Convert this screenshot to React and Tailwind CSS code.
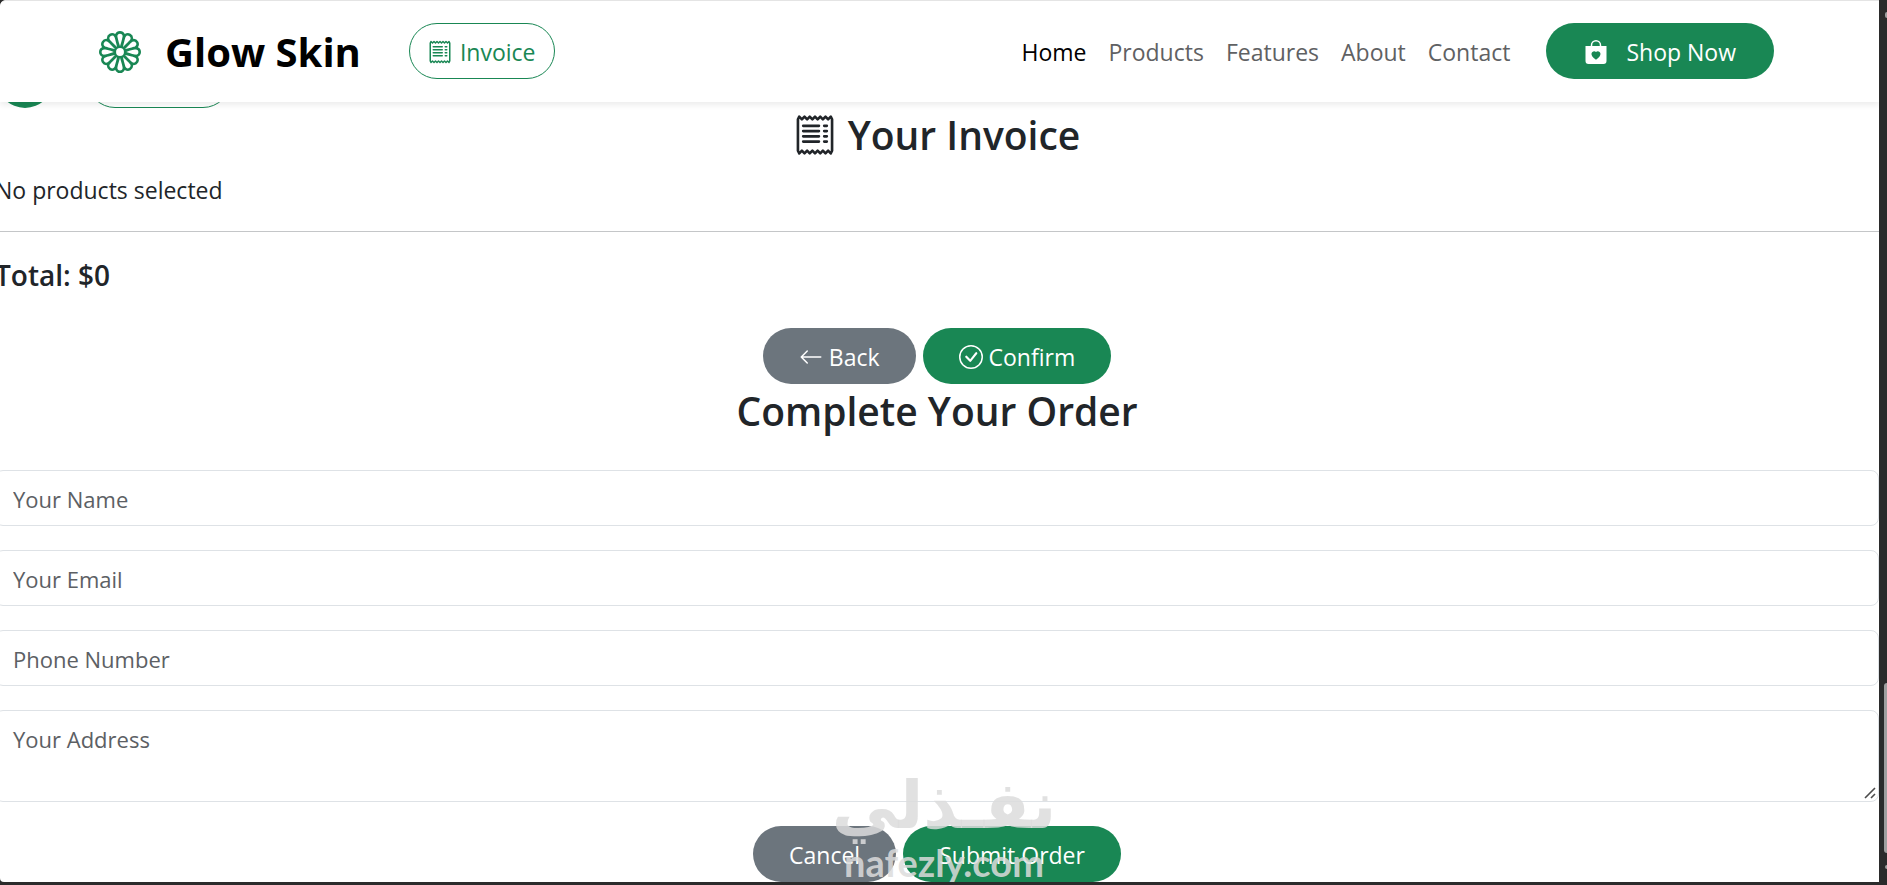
import { BsArrowLeft, BsBagHeartFill, BsCheckCircle, BsFlower1, BsReceipt } from "react-icons/bs";

const pill = "inline-flex h-14 items-center justify-center rounded-full text-[23px] leading-9 pt-0.5";
const field =
  "block w-full rounded-lg border border-[#dee2e6] bg-white px-[17px] text-[22px] text-[#212529] placeholder:text-[#5c6064] placeholder:opacity-100";

const links = ["Home", "Products", "Features", "About", "Contact"];

const fields = [
  { id: "name", label: "Your Name", type: "text" },
  { id: "email", label: "Your Email", type: "email" },
  { id: "phone", label: "Phone Number", type: "tel" },
];

function Header() {
  return (
    <header className="relative z-10 flex h-[102px] items-center justify-between rounded-tl-md border-t border-[#e4e4e4] bg-white pr-[105px] pb-0.5 pl-[99px] shadow-[0_3px_6px_rgba(0,0,0,0.08)]">
      <div className="flex items-center">
        <a href="#home" className="flex items-center gap-6 pt-0.5 text-[40px] font-bold text-black">
          <BsFlower1 className="size-[42px] text-[#198754]" />
          Glow Skin
        </a>
        <button type="button" className={`${pill} ml-12 gap-2 border border-[#198754] px-[18px] text-[#198754]`}>
          <BsReceipt className="size-6" />
          Invoice
        </button>
      </div>
      <div className="flex items-center">
        <nav className="flex items-center gap-[22px] pt-1 text-[23px] text-[#5f6163]">
          {links.map((link) => (
            <a key={link} href={`#${link.toLowerCase()}`} className={link === "Home" ? "text-black" : ""}>
              {link}
            </a>
          ))}
        </nav>
        <a href="#shop" className={`${pill} ml-9 gap-[18px] bg-[#198754] px-[38px] text-white`}>
          <BsBagHeartFill className="size-6" />
          Shop Now
        </a>
      </div>
    </header>
  );
}

function InvoiceSection() {
  return (
    <section>
      <h2 className="flex items-center justify-center gap-3 pt-0.5 text-[39px] leading-[50px] font-semibold">
        <BsReceipt className="size-[42px]" />
        Your Invoice
      </h2>
      <p className="mt-3 text-[23px] leading-9">No products selected</p>
      <hr className="mt-[23px] border-[#c4c6c8]" />
      <p className="mt-[25px] text-[28px] leading-9 font-semibold">Total: $0</p>
      <div className="mt-[35px] flex justify-center gap-[7px]">
        <button type="button" className={`${pill} gap-1.5 bg-[#6c757d] px-9 text-white`}>
          <BsArrowLeft className="size-6" />
          Back
        </button>
        <button type="button" className={`${pill} gap-1.5 bg-[#198754] px-9 text-white`}>
          <BsCheckCircle className="size-6" />
          Confirm
        </button>
      </div>
    </section>
  );
}

function ResizeGrip() {
  return (
    <svg
      viewBox="0 0 12 12"
      aria-hidden="true"
      className="pointer-events-none absolute right-[3px] bottom-[3px] size-3"
      fill="none"
      stroke="#4b4b4b"
      strokeWidth="1.6"
    >
      <path d="M1 11 11 1M7 11l4-4" />
    </svg>
  );
}

function OrderForm() {
  return (
    <form className="relative">
      <h2 className="pt-0.5 text-center text-[39px] leading-[50px] font-semibold">Complete Your Order</h2>
      <div className="mt-[34px] flex flex-col gap-6">
        {fields.map(({ id, label, type }) => (
          <input
            key={id}
            id={id}
            type={type}
            aria-label={label}
            placeholder={label}
            className={`${field} h-14 pt-0.5`}
          />
        ))}
        <div className="relative">
          <textarea
            id="address"
            aria-label="Your Address"
            placeholder="Your Address"
            className={`${field} h-[92px] resize-y py-2 leading-10 [&::-webkit-resizer]:bg-transparent`}
          />
          <ResizeGrip />
        </div>
      </div>
      <div className="mt-6 flex justify-center gap-[7px]">
        <button type="button" className={`${pill} bg-[#6c757d] px-9 text-white`}>
          Cancel
        </button>
        <button type="submit" className={`${pill} bg-[#198754] px-9 text-white`}>
          Submit Order
        </button>
      </div>
      <Watermark />
    </form>
  );
}

function Watermark() {
  return (
    <div className="pointer-events-none absolute inset-x-0 bottom-0 flex flex-col items-center pl-3.5 text-[#dcdcdc]/85">
      <span dir="rtl" lang="ar" className="font-['DejaVu_Sans',sans-serif] text-[66px] leading-[72px] font-bold">
        نفـذلي
      </span>
      <span className="font-[Lato,sans-serif] text-[38px] leading-10 font-bold">nafezly.com</span>
    </div>
  );
}

function Scrollbar() {
  return (
    <div aria-hidden="true" className="flex w-2 shrink-0 flex-col items-end justify-between bg-[#2b2b2b] pt-3 pb-4">
      <span className="h-1.5 w-0.5 rounded-l bg-[#9f9f9f]" />
      <div className="flex flex-col items-end gap-3">
        <span className="h-[170px] w-[3px] rounded-l bg-[#9f9f9f]" />
        <span className="h-1 w-0.5 rounded-l bg-[#9f9f9f]" />
      </div>
    </div>
  );
}

export default function App() {
  return (
    <div className="flex min-h-screen overflow-hidden bg-[#2b2b2b] font-['Open_Sans','Noto_Sans',sans-serif] text-[#212529]">
      <div className="min-w-0 flex-1">
        <div className="overflow-hidden rounded-tl-md rounded-bl-sm bg-white">
          <Header />
          <main className="-ml-[5px]">
            <div aria-hidden="true" className="flex h-1.5 items-end gap-[34px] overflow-hidden pl-0.5">
              <span className="size-14 shrink-0 rounded-full bg-[#198754]" />
              <span className="h-14 w-36 shrink-0 rounded-full border border-[#198754]" />
            </div>
            <InvoiceSection />
            <OrderForm />
          </main>
        </div>
      </div>
      <Scrollbar />
    </div>
  );
}
